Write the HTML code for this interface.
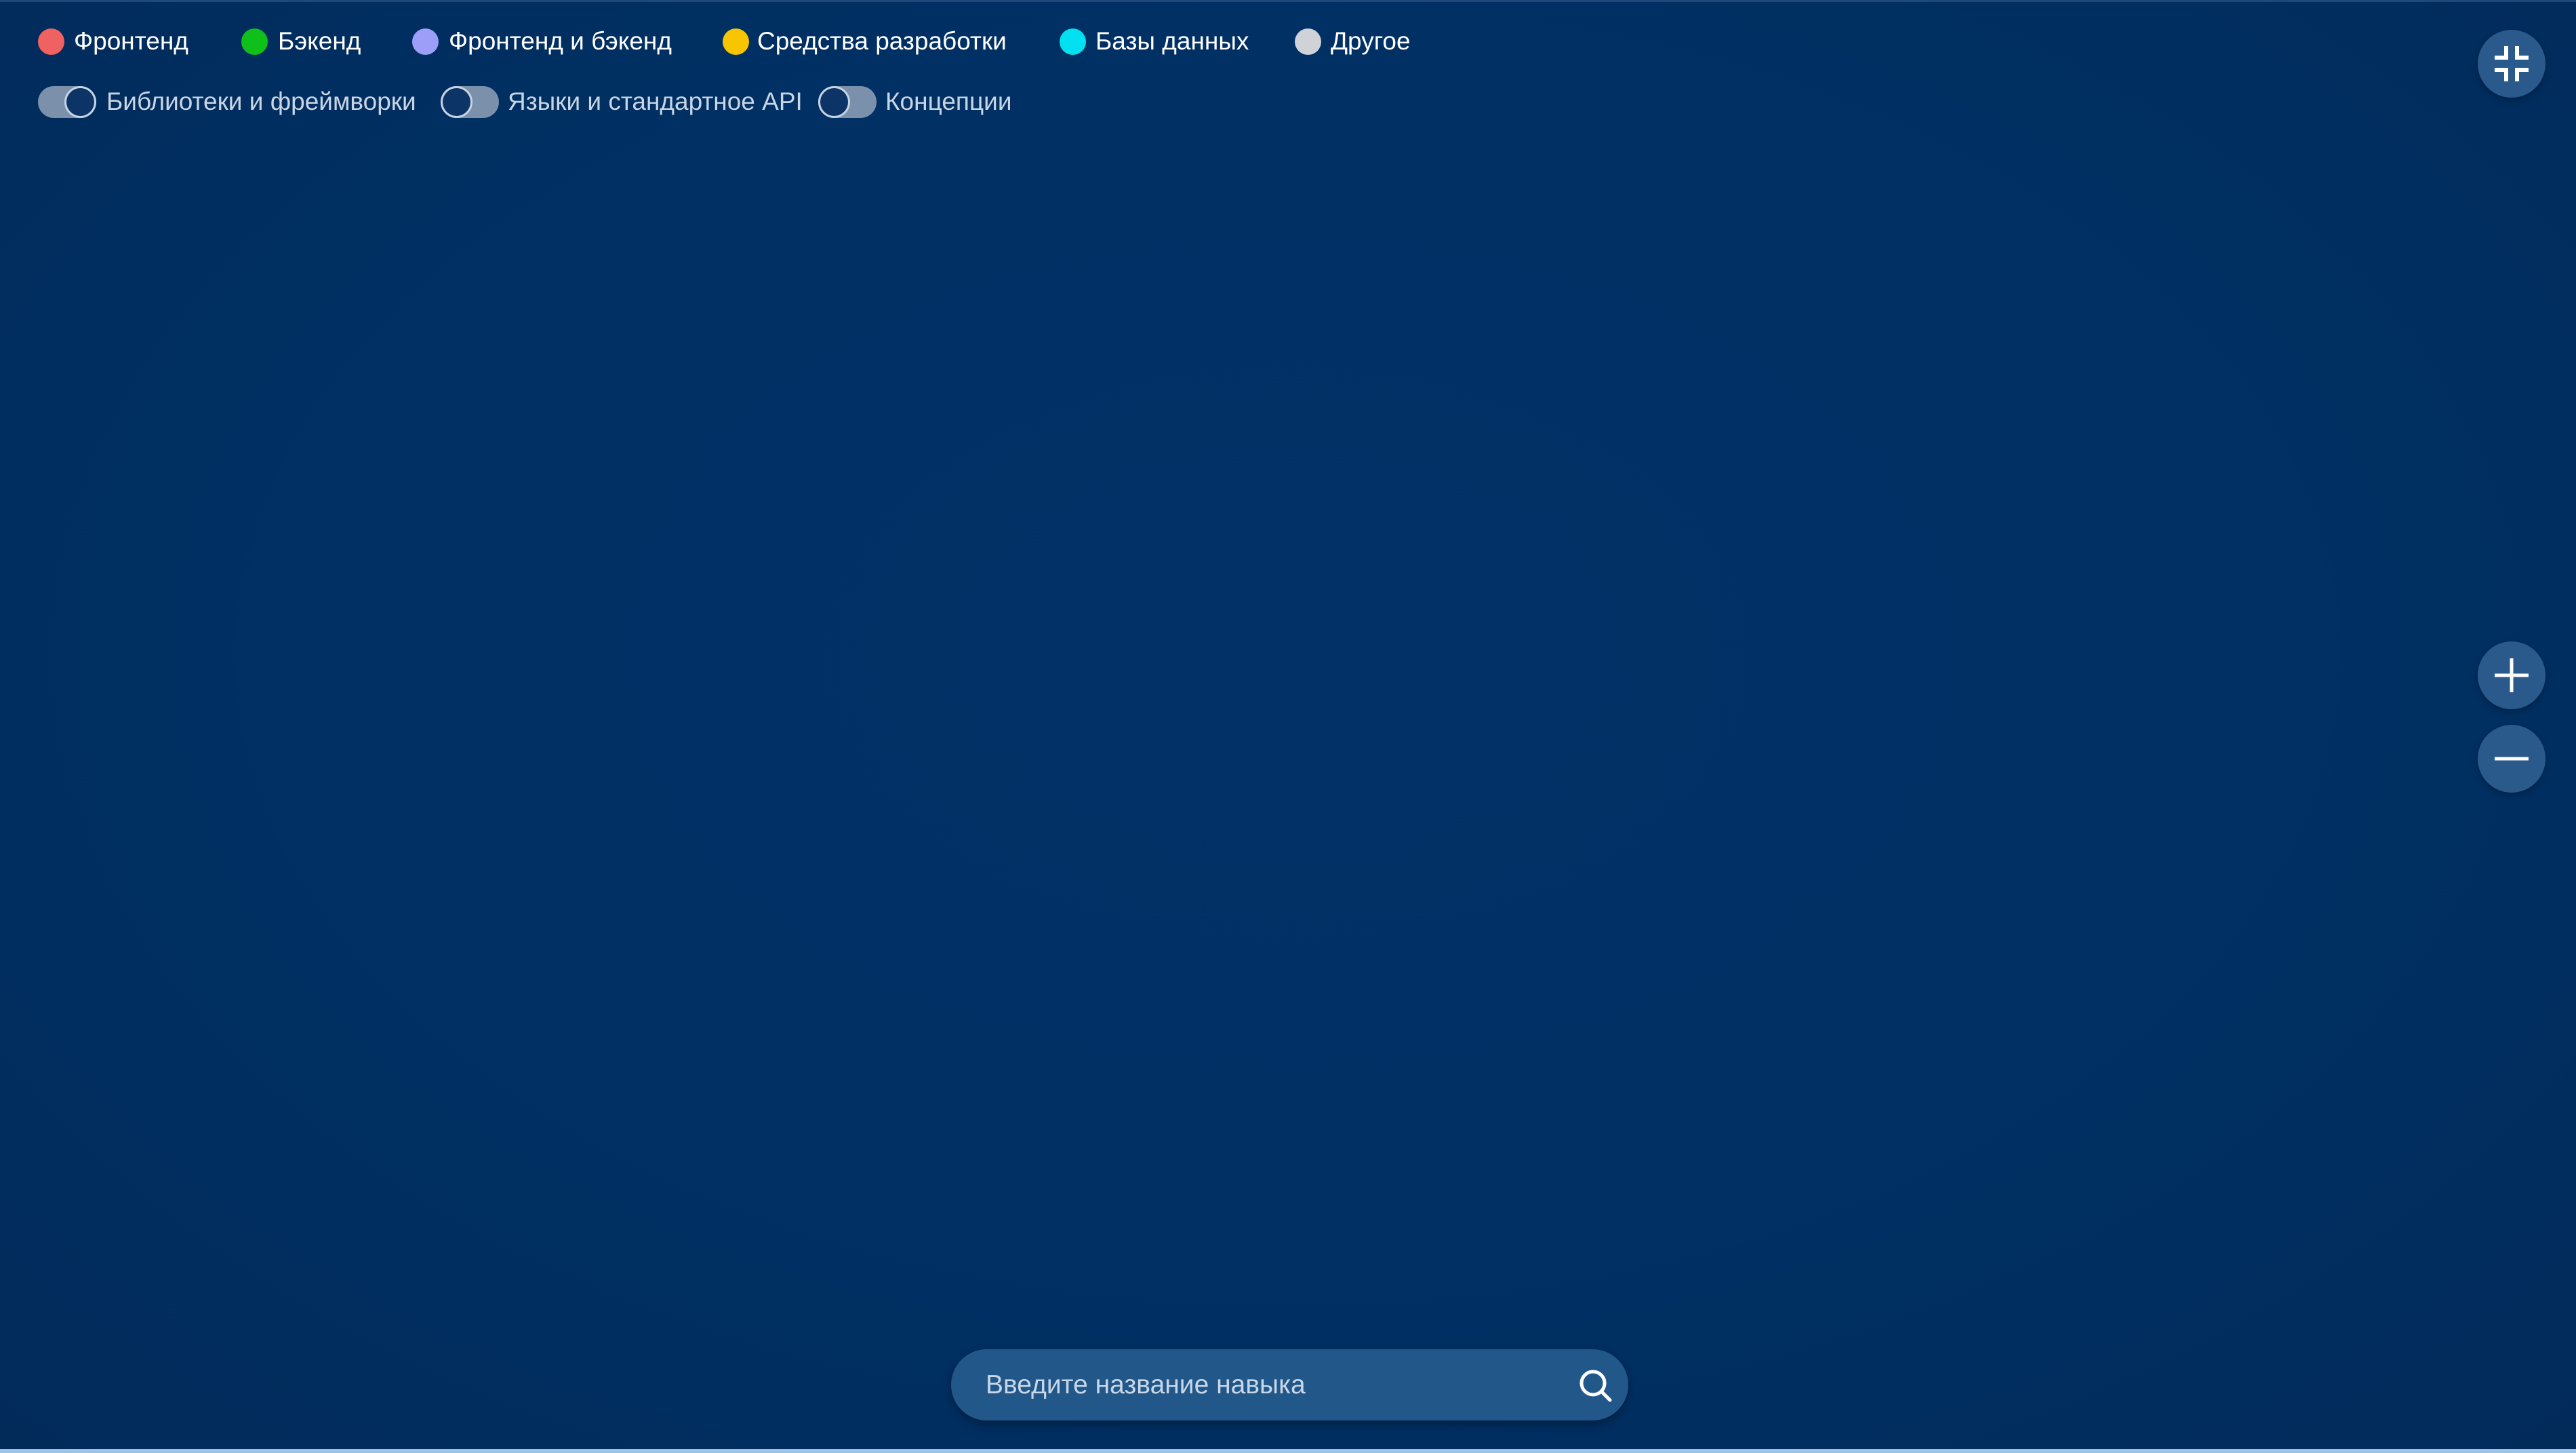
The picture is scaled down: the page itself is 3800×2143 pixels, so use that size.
<!DOCTYPE html>
<html><head><meta charset="utf-8"><style>
*{margin:0;padding:0;box-sizing:border-box}
html,body{width:3800px;height:2143px;overflow:hidden}
body{background:radial-gradient(ellipse at 50% 45%,#013166 0%,#003064 55%,#022b5a 100%);font-family:"Liberation Sans","Noto Sans CJK SC",sans-serif;position:relative}
.top{position:absolute;left:0;top:0;width:3800px;height:3px;background:#1d4877}
.bot{position:absolute;left:0;top:2137px;width:3800px;height:6px;background:#9fc4e2}
.lg{position:absolute;top:61px;transform:translateY(-50%);display:flex;align-items:center;color:#fff;font-size:37px}
.dot{position:absolute;top:42px;width:39px;height:39px;border-radius:50%}
.t{position:absolute;top:150px;transform:translateY(-50%);color:#c9d5e3;font-size:37px}
.tg{position:absolute;top:127px;width:86px;height:47px;border-radius:24px;background:#7b90ab}
.kn{position:absolute;top:0;width:47px;height:47px;border-radius:50%;background:#0d3466;border:3px solid #c5d3e3}
.btn{position:absolute;left:3655px;width:100px;height:100px;border-radius:50%;background:#2a5a8b;box-shadow:0 4px 10px rgba(0,0,0,.25)}
.search{position:absolute;left:1403px;top:1990px;width:999px;height:105px;border-radius:53px;background:#22578a;box-shadow:0 6px 14px rgba(0,0,0,.3)}
.search span{position:absolute;left:51px;top:50%;transform:translateY(-50%);color:#c8d7e7;font-size:39px}
</style></head><body>
<div class="top"></div>
<div class="dot" style="left:56px;background:#f06262"></div><div class="lg" style="left:109px">Фронтенд</div>
<div class="dot" style="left:356px;background:#0fbf1a"></div><div class="lg" style="left:410px">Бэкенд</div>
<div class="dot" style="left:608px;background:#9c9ef8"></div><div class="lg" style="left:662px">Фронтенд и бэкенд</div>
<div class="dot" style="left:1066px;background:#f8c600"></div><div class="lg" style="left:1117px">Средства разработки</div>
<div class="dot" style="left:1563px;background:#00e0f0"></div><div class="lg" style="left:1616px">Базы данных</div>
<div class="dot" style="left:1910px;background:#cfd2d6"></div><div class="lg" style="left:1963px">Другое</div>

<div class="tg" style="left:56px"><div class="kn" style="right:0"></div></div><div class="t" style="left:157px">Библиотеки и фреймворки</div>
<div class="tg" style="left:650px"><div class="kn" style="left:0"></div></div><div class="t" style="left:749px">Языки и стандартное API</div>
<div class="tg" style="left:1207px"><div class="kn" style="left:0"></div></div><div class="t" style="left:1306px">Концепции</div>

<div class="btn" style="top:44px"><svg width="100" height="100" viewBox="0 0 100 100"><g stroke="#fff" stroke-width="6" fill="none"><path d="M25 41H42V24"/><path d="M58 24V41H75"/><path d="M25 59H42V76"/><path d="M75 59H58V76"/></g></svg></div>
<div class="btn" style="top:946px"><svg width="100" height="100" viewBox="0 0 100 100"><g stroke="#fff" stroke-width="5"><path d="M25 50H75M50 25V75"/></g></svg></div>
<div class="btn" style="top:1069px"><svg width="100" height="100" viewBox="0 0 100 100"><path d="M25 50H75" stroke="#fff" stroke-width="5"/></svg></div>

<div class="search"><span>Введите название навыка</span>
<svg style="position:absolute;left:925px;top:28px" width="52" height="52" viewBox="0 0 52 52"><circle cx="22" cy="22" r="17" stroke="#fff" stroke-width="5" fill="none"/><path d="M34 34L47 47" stroke="#fff" stroke-width="5" stroke-linecap="round"/></svg></div>
<div class="bot"></div>
</body></html>
